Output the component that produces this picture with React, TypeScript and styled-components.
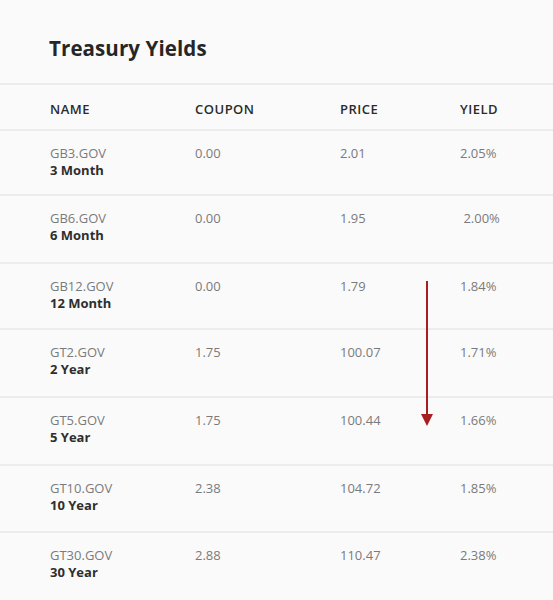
import styled, { createGlobalStyle } from 'styled-components';

const GlobalStyle = createGlobalStyle`
  body {
    margin: 0;
    background: #fafafa;
    font-family: 'Open Sans', 'Liberation Sans', sans-serif;
  }
`;

const Page = styled.div`
  width: 553px;
  height: 600px;
  overflow: hidden;
  background: #fafafa;
`;

const TitleBar = styled.div`
  height: 85px;
  padding-left: 49px;
  box-sizing: border-box;
  display: flex;
  align-items: flex-end;
  border-bottom: 2px solid #ececec;
`;

const Title = styled.h1`
  margin: 0 0 21px;
  font-size: 20.5px;
  line-height: 28px;
  font-weight: 700;
  letter-spacing: 0.1px;
  color: #262626;
`;

const Row = styled.div<{ $height: number }>`
  display: grid;
  grid-template-columns: 145px 145px 120px 1fr;
  padding-left: 50px;
  height: ${({ $height }) => $height}px;
  box-sizing: border-box;
  border-bottom: 2px solid #ececec;
`;

const HeaderRow = styled(Row)`
  align-items: center;
  padding-top: 3px;
`;

const HeadCell = styled.div`
  font-size: 13px;
  font-weight: 600;
  letter-spacing: 0.5px;
  color: #2b2b2b;
  text-transform: uppercase;
`;

const Body = styled.div`
  position: relative;
`;

const DataRow = styled(Row)`
  padding-top: 14px;
`;

const Cell = styled.div`
  font-size: 13px;
  line-height: 17px;
  color: #7a7a7a;
`;

const Code = styled.div`
  font-size: 13px;
  line-height: 17px;
  color: #7a7a7a;
`;

const Term = styled.div`
  font-size: 13px;
  line-height: 17px;
  font-weight: 700;
  color: #2e2e2e;
`;

const Arrow = styled.svg`
  position: absolute;
  left: 419px;
  top: 150px;
`;

const bonds = [
  { code: 'GB3.GOV', term: '3 Month', coupon: '0.00', price: '2.01', yld: '2.05%', h: 65 },
  { code: 'GB6.GOV', term: '6 Month', coupon: '0.00', price: '1.95', yld: '\u00a02.00%', h: 68 },
  { code: 'GB12.GOV', term: '12 Month', coupon: '0.00', price: '1.79', yld: '1.84%', h: 66 },
  { code: 'GT2.GOV', term: '2 Year', coupon: '1.75', price: '100.07', yld: '1.71%', h: 68 },
  { code: 'GT5.GOV', term: '5 Year', coupon: '1.75', price: '100.44', yld: '1.66%', h: 68 },
  { code: 'GT10.GOV', term: '10 Year', coupon: '2.38', price: '104.72', yld: '1.85%', h: 67 },
  { code: 'GT30.GOV', term: '30 Year', coupon: '2.88', price: '110.47', yld: '2.38%', h: 80 },
];

export default function App() {
  return (
    <Page>
      <GlobalStyle />
      <TitleBar>
        <Title>Treasury Yields</Title>
      </TitleBar>
      <HeaderRow $height={46}>
        <HeadCell>Name</HeadCell>
        <HeadCell>Coupon</HeadCell>
        <HeadCell>Price</HeadCell>
        <HeadCell>Yield</HeadCell>
      </HeaderRow>
      <Body>
        {bonds.map((b) => (
          <DataRow key={b.code} $height={b.h}>
            <div>
              <Code>{b.code}</Code>
              <Term>{b.term}</Term>
            </div>
            <Cell>{b.coupon}</Cell>
            <Cell>{b.price}</Cell>
            <Cell>{b.yld}</Cell>
          </DataRow>
        ))}
        <Arrow width="16" height="146" viewBox="0 0 16 146">
          <line x1="8" y1="0" x2="8" y2="134" stroke="#a81d20" strokeWidth="2" />
          <polygon points="2,133 14,133 8,145" fill="#a81d20" />
        </Arrow>
      </Body>
    </Page>
  );
}
